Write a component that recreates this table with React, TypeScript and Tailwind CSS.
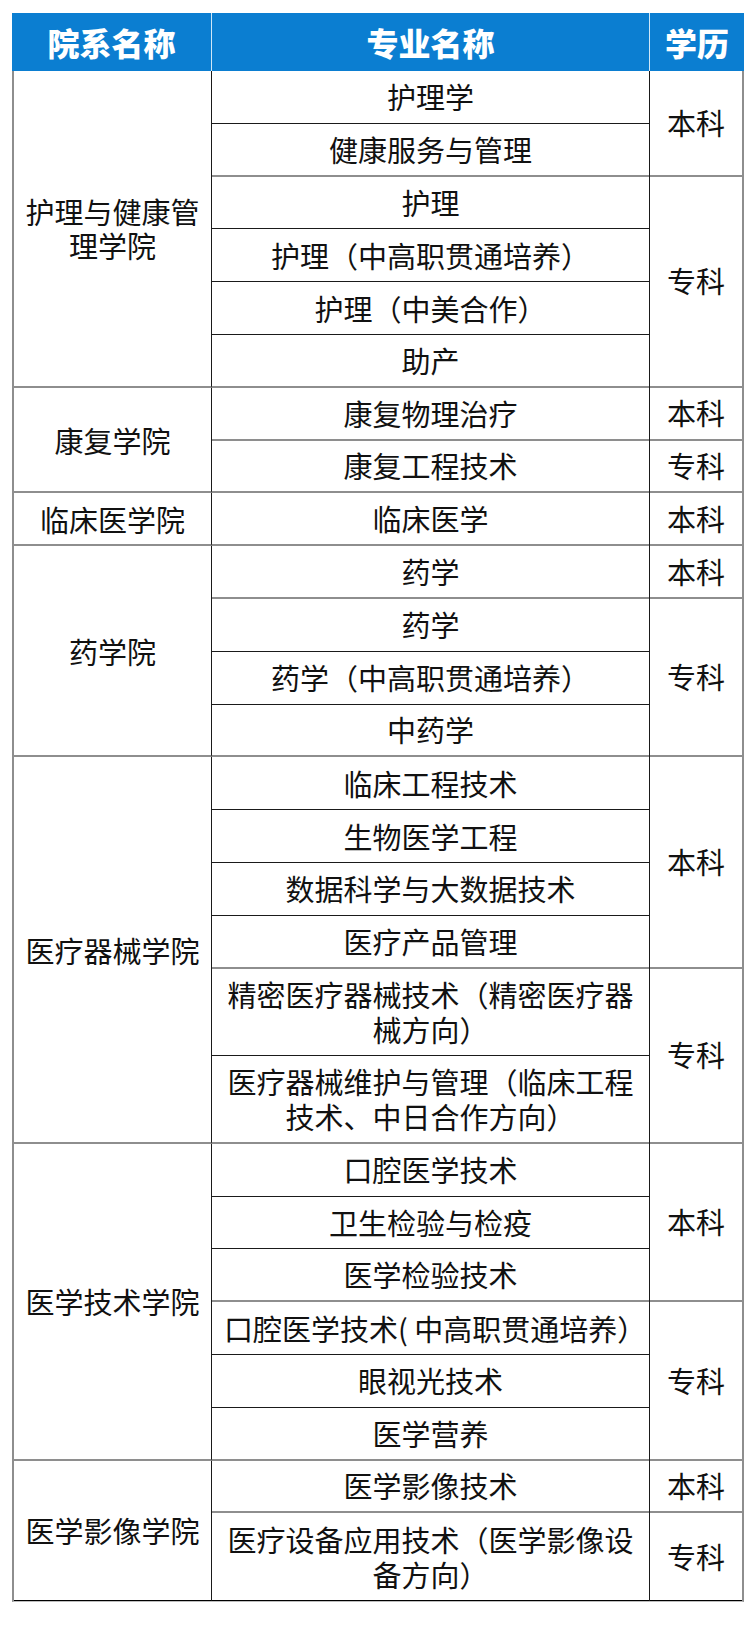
import React from 'react';

type Sub = { deg: string; majors: string[] };
type Group = { name: string; subs: Sub[] };

const groups: Group[] = [
  {
    name: '护理与健康管理学院',
    subs: [
      { deg: '本科', majors: ['护理学', '健康服务与管理'] },
      { deg: '专科', majors: ['护理', '护理（中高职贯通培养）', '护理（中美合作）', '助产'] },
    ],
  },
  {
    name: '康复学院',
    subs: [
      { deg: '本科', majors: ['康复物理治疗'] },
      { deg: '专科', majors: ['康复工程技术'] },
    ],
  },
  { name: '临床医学院', subs: [{ deg: '本科', majors: ['临床医学'] }] },
  {
    name: '药学院',
    subs: [
      { deg: '本科', majors: ['药学'] },
      { deg: '专科', majors: ['药学', '药学（中高职贯通培养）', '中药学'] },
    ],
  },
  {
    name: '医疗器械学院',
    subs: [
      { deg: '本科', majors: ['临床工程技术', '生物医学工程', '数据科学与大数据技术', '医疗产品管理'] },
      {
        deg: '专科',
        majors: ['精密医疗器械技术（精密医疗器械方向）', '医疗器械维护与管理（临床工程技术、中日合作方向）'],
      },
    ],
  },
  {
    name: '医学技术学院',
    subs: [
      { deg: '本科', majors: ['口腔医学技术', '卫生检验与检疫', '医学检验技术'] },
      { deg: '专科', majors: ['口腔医学技术( 中高职贯通培养）', '眼视光技术', '医学营养'] },
    ],
  },
  {
    name: '医学影像学院',
    subs: [
      { deg: '本科', majors: ['医学影像技术'] },
      { deg: '专科', majors: ['医疗设备应用技术（医学影像设备方向）'] },
    ],
  },
];

const isDouble = (s: string) => s.length > 16;

export default function App() {
  return (
    <div
      className="w-[756px] h-[1636px] bg-white pt-[13px] pl-[12px] text-[#111]"
      style={{ fontFamily: '"Noto Sans CJK SC", "Noto Sans", sans-serif' }}
    >
      <div className="w-[732px]">
        {/* header */}
        <div className="flex h-[58px] bg-[#0b7ed1] text-white font-black text-[32px]">
          <div className="w-[200px] flex items-center justify-center border-r border-[#cfe7f8]">院系名称</div>
          <div className="w-[438px] flex items-center justify-center border-r border-[#cfe7f8]">专业名称</div>
          <div className="flex-1 flex items-center justify-center">学历</div>
        </div>
        {/* body */}
        <div className="border-l-2 border-r-2 border-[#8e8e8e] border-b border-b-[#bdbdbd]">
          {groups.map((g, gi) => {
            const lastGroup = gi === groups.length - 1;
            return (
              <div key={gi} className="flex">
                <div
                  className={`w-[198px] shrink-0 flex items-center justify-center text-center px-[8px] text-[29px] leading-[34px] border-r border-[#1a1a1a] ${
                    lastGroup ? 'border-b border-b-black' : 'border-b-2 border-b-[#8e8e8e]'
                  }`}
                >
                  {g.name}
                </div>
                <div className="flex-1 flex flex-col">
                  {g.subs.map((s, si) => {
                    const lastSub = lastGroup && si === g.subs.length - 1;
                    return (
                      <div key={si} className="flex">
                        <div className="w-[438px] shrink-0 flex flex-col border-r border-[#1a1a1a]">
                          {s.majors.map((m, mi) => {
                            const lastInSub = mi === s.majors.length - 1;
                            const border = lastInSub
                              ? lastSub
                                ? 'border-b border-b-black'
                                : 'border-b-2 border-b-[#8e8e8e]'
                              : 'border-b border-b-[#1a1a1a]';
                            return (
                              <div
                                key={mi}
                                className={`${
                                  isDouble(m) ? 'h-[87.6px]' : 'h-[52.8px]'
                                } flex items-center justify-center text-center px-[12px] text-[29px] leading-[35px] ${border}`}
                              >
                                {m}
                              </div>
                            );
                          })}
                        </div>
                        <div
                          className={`flex-1 flex items-center justify-center text-[29px] ${
                            lastSub ? 'border-b border-b-black' : 'border-b-2 border-b-[#8e8e8e]'
                          }`}
                        >
                          {s.deg}
                        </div>
                      </div>
                    );
                  })}
                </div>
              </div>
            );
          })}
        </div>
      </div>
    </div>
  );
}
